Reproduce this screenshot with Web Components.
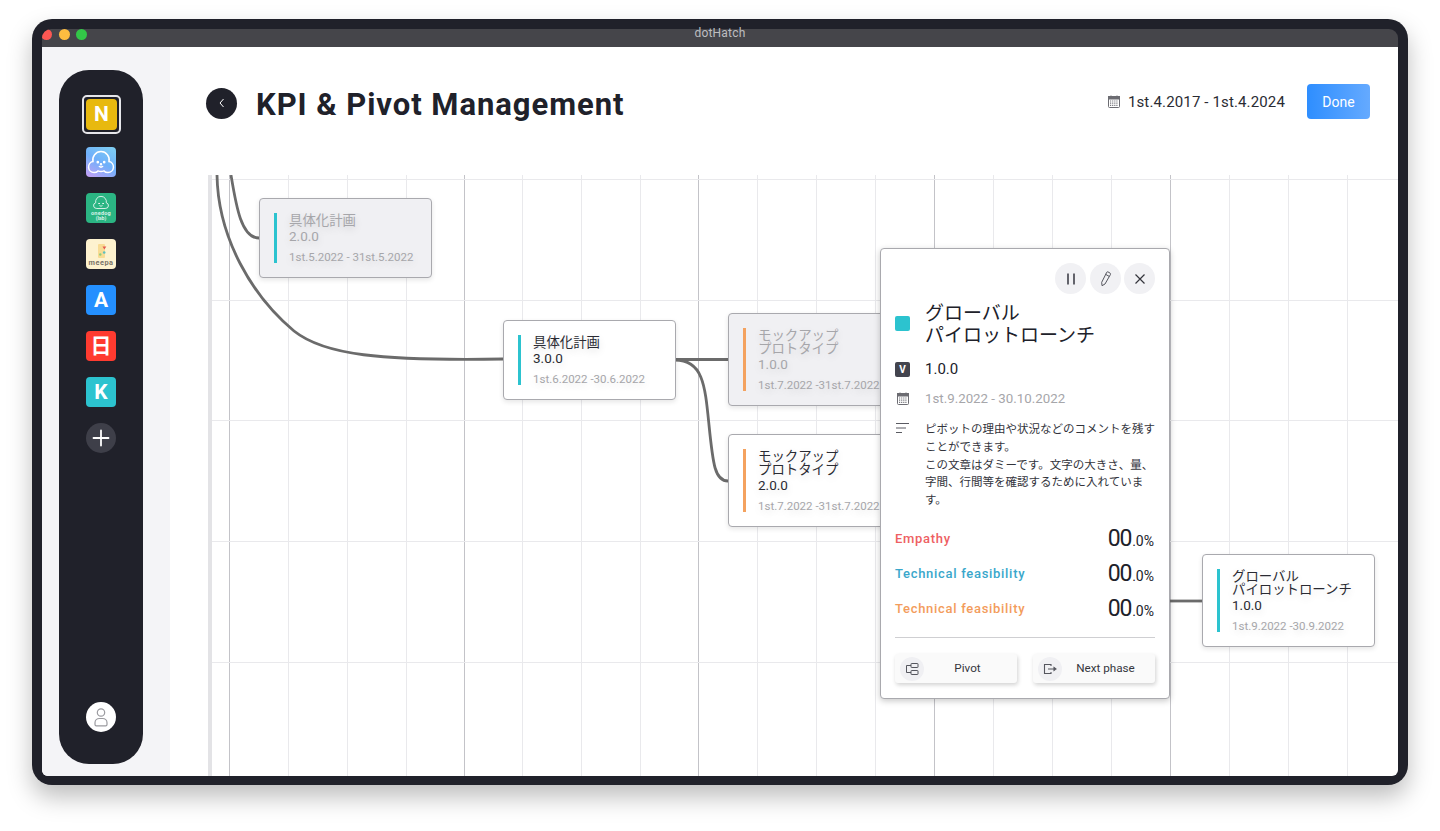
<!DOCTYPE html>
<html lang="ja">
<head>
<meta charset="utf-8">
<title>dotHatch</title>
<style>
  html, body { margin: 0; background: #fff; }
  body {
    height: 831px;
    font-family: Roboto, "Noto Sans CJK JP", sans-serif;
    color: #20212a;
    overflow: hidden;
  }
</style>
</head>
<body>
<device-frame title-text="dotHatch">
  <side-nav slot="side">
    <app-icon color="#e8b90f" label="N" selected></app-icon>
    <app-icon color="linear-gradient(30deg,#c89ff5 0%,#6fb0fa 50%,#7fd0f2 100%)">
      <svg viewBox="0 0 30 30" width="30" height="30" fill="none" stroke="#fff" stroke-width="1.5" stroke-linecap="round">
        <path d="M8 25.5A5.5 5.5 0 0 1 7 14.6A8.2 8.2 0 1 1 23 14.6A5.5 5.5 0 0 1 22 25.5C20 25.5 18.5 24.500 18 23.900Q15 25 12 23.900C11.500 24.500 10 25.500 8 25.500z"/>
        <path d="M13.400 19.500c.9.700 2.300.700 3.200 0"/>
        <circle cx="11.800" cy="15.200" r=".6" fill="#fff"/>
        <circle cx="18.200" cy="15.200" r=".6" fill="#fff"/>
        <circle cx="15" cy="17.200" r=".5" fill="#fff"/>
      </svg>
    </app-icon>
    <app-icon color="#2bb583">
      <svg viewBox="0 0 30 30" width="30" height="30" fill="none" stroke="#fff" stroke-width=".8" stroke-linecap="round">
        <path d="M10.500 15.500A2.900 2.900 0 0 1 9.700 9.800A5.400 5.400 0 1 1 20.300 9.800A2.900 2.900 0 0 1 19.500 15.500z"/>
        <circle cx="13" cy="10.500" r=".3" fill="#fff"/>
        <circle cx="17" cy="10.500" r=".3" fill="#fff"/>
        <path d="M13.800 12.800c.7.400 1.700.4 2.400 0"/>
        <text x="15" y="21.500" font-family="Roboto, sans-serif" font-size="5.600" fill="#d5f1e6" stroke="none" text-anchor="middle" letter-spacing=".2">onedog</text>
        <text x="15" y="26.500" font-family="Roboto, sans-serif" font-size="5.200" fill="#d5f1e6" stroke="none" text-anchor="middle">(lab)</text>
      </svg>
    </app-icon>
    <app-icon color="#fdf2cf">
      <svg viewBox="0 0 30 30" width="30" height="30">
        <rect x="12" y="5" width="7" height="14" rx="1" fill="#f8dc94"/>
        <path d="M16.500 7.500h3.800l-1.900 3z" fill="#e4574f"/>
        <circle cx="18.200" cy="13.500" r="1.300" fill="#5cc0c0"/>
        <circle cx="14.300" cy="15.500" r="1.200" fill="#8fcf7a"/>
        <text x="15" y="26" font-family="Roboto, sans-serif" font-size="7.400" fill="#7a746a" text-anchor="middle" letter-spacing=".5">meepa</text>
      </svg>
    </app-icon>
    <app-icon color="#2490ff" label="A"></app-icon>
    <app-icon color="#ff3b30" label="日"></app-icon>
    <app-icon color="#2cc3cf" label="K"></app-icon>
    <app-icon color="#3e3f49" round>
      <svg viewBox="0 0 30 30" width="30" height="30" stroke="#fff" stroke-width="1.800" stroke-linecap="round">
        <path d="M15 7.500v15M7.500 15h15"/>
      </svg>
    </app-icon>
    <app-icon slot="bottom" color="#fff" round>
      <svg viewBox="0 0 30 30" width="30" height="30" fill="none" stroke="#9a9a9f" stroke-width="1.200">
        <circle cx="15" cy="10.500" r="3.700"/>
        <path d="M9 22.500v-1.800c0-2.500 2-4.200 4.400-4.200h3.200c2.400 0 4.400 1.700 4.400 4.200v1.800c0 .8-.6 1.300-1.300 1.300H10.300c-.7 0-1.300-.5-1.300-1.300z"/>
      </svg>
    </app-icon>
  </side-nav>

  <page-header slot="main" heading="KPI &amp; Pivot Management" range="1st.4.2017 - 1st.4.2024" action="Done"></page-header>

  <pivot-canvas slot="main">
    <phase-node x="259" y="198" accent="#2cc3cf" muted version="2.0.0" dates="1st.5.2022 - 31st.5.2022">具体化計画</phase-node>
    <phase-node x="503" y="320" accent="#2cc3cf" version="3.0.0" dates="1st.6.2022 -30.6.2022">具体化計画</phase-node>
    <phase-node x="728" y="313" accent="#f4a25f" muted version="1.0.0" dates="1st.7.2022 -31st.7.2022">モックアップ<br>プロトタイプ</phase-node>
    <phase-node x="728" y="434" accent="#f4a25f" version="2.0.0" dates="1st.7.2022 -31st.7.2022">モックアップ<br>プロトタイプ</phase-node>
    <phase-node x="1202" y="554" accent="#2cc3cf" version="1.0.0" dates="1st.9.2022 -30.9.2022">グローバル<br>パイロットローンチ</phase-node>

    <detail-popup x="880" y="248" accent="#2cc3cf" version="1.0.0" dates="1st.9.2022 - 30.10.2022">
      <span slot="title">グローバル<br>パイロットローンチ</span>
      <span slot="comment">ピボットの理由や状況などのコメントを残す<br>ことができます。<br>この文章はダミーです。文字の大きさ、量、<br>字間、行間等を確認するために入れていま<br>す。</span>
      <metric-row slot="metrics" color="#ee5f63" label="Empathy"></metric-row>
      <metric-row slot="metrics" color="#3aa7cb" label="Technical feasibility"></metric-row>
      <metric-row slot="metrics" color="#f39c5c" label="Technical feasibility"></metric-row>
    </detail-popup>
  </pivot-canvas>
</device-frame>

<script>
const CALENDAR_ICON = `
  <svg width="12" height="13" viewBox="0 0 12 13" fill="none" stroke="#6c6c72" stroke-width="1">
    <rect x=".5" y="1.500" width="11" height="11" rx="1"/>
    <rect x=".5" y="1.500" width="11" height="2.500" fill="#6c6c72"/>
    <path d="M3 .5v2M9 .5v2"/>
    <path d="M2 6h8M2 8.200h8M2 10.400h8" stroke="#77777d" stroke-width="1.200" stroke-dasharray="1.200 .9"/>
  </svg>`;

// Outer laptop-ish window with title bar
class DeviceFrame extends HTMLElement {
  constructor() {
    super();
    const css = `
      :host {
        display: block;
        box-sizing: border-box;
        width: 1376px;
        height: 766px;
        margin: 19px 32px 0;
        padding: 10px 10px 9px;
        background: #20212a;
        border-radius: 20px;
        box-shadow: 0 12px 24px rgba(0, 0, 0, .26);
      }
      .window {
        height: 100%;
        display: flex;
        flex-direction: column;
      }
      .bar {
        flex: none;
        box-sizing: border-box;
        height: 18px;
        padding-bottom: 10px;
        background: #45454a;
        border-radius: 9px 9px 0 0;
        position: relative;
        font-size: 12px;
        line-height: 12px;
        color: #bdbdc0;
        letter-spacing: .2px;
        display: flex;
        align-items: center;
        justify-content: center;
      }
      .corner {
        position: absolute;
        inset: 0;
        overflow: hidden;
        border-radius: 9px 9px 0 0;
      }
      .lights {
        position: absolute;
        left: -1px;
        top: 0;
        display: flex;
        gap: 6.5px;
      }
      .lights i {
        width: 11px;
        height: 11px;
        border-radius: 50%;
      }
      .body {
        flex: 1;
        min-height: 0;
        display: flex;
        background: #fff;
        border-radius: 0 0 6px 6px;
        overflow: hidden;
      }
      .side {
        flex: none;
        width: 128px;
        background: #f4f4f7;
        display: flex;
        box-sizing: border-box;
        padding: 23px 26px 12px 17px;
      }
      .main {
        flex: 1;
        min-width: 0;
        display: flex;
        flex-direction: column;
      }
    `;
    const shadow = this.attachShadow({mode: 'open'});
    shadow.innerHTML = `
      <style>${css}</style>
      <div class="window">
        <div class="bar">
          <div class="corner">
            <div class="lights">
              <i style="background:#fc5753"></i><i style="background:#fdbc40"></i><i style="background:#33c748"></i>
            </div>
          </div>
          <span style="position:relative">${this.getAttribute('title-text')}</span>
        </div>
        <div class="body">
          <div class="side"><slot name="side"></slot></div>
          <div class="main"><slot name="main"></slot></div>
        </div>
      </div>
    `;
  }
}

class SideNav extends HTMLElement {
  constructor() {
    super();
    const shadow = this.attachShadow({mode: 'open'});
    shadow.innerHTML = `
      <style>
        :host {
          display: flex;
          flex-direction: column;
          align-items: center;
          box-sizing: border-box;
          width: 84px;
          padding: 29px 0 32px;
          background: #20212a;
          border-radius: 30px;
        }
        .apps { display: flex; flex-direction: column; align-items: center; gap: 16px; }
        .bottom { margin-top: auto; }
      </style>
      <div class="apps"><slot></slot></div>
      <div class="bottom"><slot name="bottom"></slot></div>
    `;
  }
}

class AppIcon extends HTMLElement {
  constructor() {
    super();
    const shadow = this.attachShadow({mode: 'open'});
    shadow.innerHTML = `
      <style>
        :host {
          display: block;
          position: relative;
          width: 30px;
          height: 30px;
        }
        :host([selected]) { margin-bottom: 2px; }
        .tile {
          width: 100%;
          height: 100%;
          border-radius: 4px;
          display: flex;
          align-items: center;
          justify-content: center;
          font: 700 21px/1 Roboto, "Noto Sans CJK JP", sans-serif;
          color: #fff;
          overflow: hidden;
        }
        :host([round]) .tile { border-radius: 50%; }
        :host([selected]) .tile { width: 31px; height: 31px; }
        :host([selected]) .ring {
          position: absolute;
          left: -4px;
          top: -4px;
          width: 35px;
          height: 35px;
          border: 2px solid #e6e6ea;
          border-radius: 5px;
        }
        ::slotted(svg) { display: block; }
      </style>
      <div class="ring"></div>
      <div class="tile" style="background:${this.getAttribute('color')}">${this.getAttribute('label') || ''}<slot></slot></div>
    `;
  }
}

class PageHeader extends HTMLElement {
  constructor() {
    super();
    const css = `
      :host {
        display: flex;
        align-items: center;
        flex: none;
        box-sizing: border-box;
        height: 35px;
        margin: 37px 28px 56px 36px;
      }
      .back {
        width: 31px;
        height: 31px;
        border-radius: 50%;
        background: #20212a;
        display: flex;
        align-items: center;
        justify-content: center;
        margin-top: 3px;
      }
      h1 {
        margin: 5px 0 0 19px;
        font: 700 31px/35px Roboto, sans-serif;
        letter-spacing: .95px;
        color: #20212a;
      }
      .range {
        margin-left: auto;
        display: flex;
        align-items: center;
        gap: 8px;
        font-size: 15px;
        letter-spacing: .14px;
        color: #2a2b33;
      }
      button {
        margin-left: 22px;
        width: 63px;
        height: 35px;
        border: none;
        border-radius: 4px;
        background: linear-gradient(90deg, #2e8eff, #65aaff);
        color: #fff;
        font: 400 14px Roboto, sans-serif;
      }
    `;
    const shadow = this.attachShadow({mode: 'open'});
    shadow.innerHTML = `
      <style>${css}</style>
      <div class="back">
        <svg width="10" height="10" viewBox="0 0 10 10" fill="none" stroke="#fff" stroke-width="1"><path d="M6.500 1 3 5l3.500 4"/></svg>
      </div>
      <h1>${this.getAttribute('heading').replace('&', '&amp;')}</h1>
      <div class="range">${CALENDAR_ICON}<span>${this.getAttribute('range')}</span></div>
      <button>${this.getAttribute('action')}</button>
    `;
  }
}

// Free canvas: grid lines and connectors share page coordinates through the viewBox
class PivotCanvas extends HTMLElement {
  constructor() {
    super();
    const columns = [229, 288, 347, 406, 464, 522, 581, 640, 698, 757, 816, 875, 934, 993, 1052, 1111, 1170, 1229, 1288, 1347];
    let lines = '';
    columns.forEach((x, i) => {
      lines += `<line x1="${x + .5}" y1="175" x2="${x + .5}" y2="776" stroke="${i % 4 === 0 ? '#c3c3c8' : '#e9e9ec'}"/>`;
    });
    [179, 300, 420, 541, 662].forEach(y => {
      lines += `<line x1="212" y1="${y + .5}" x2="1398" y2="${y + .5}" stroke="#e9e9ec"/>`;
    });

    const shadow = this.attachShadow({mode: 'open'});
    shadow.innerHTML = `
      <style>
        :host {
          display: block;
          position: relative;
          flex: 1;
          min-height: 0;
          overflow: hidden;
        }
        svg { position: absolute; left: 0; top: 0; }
      </style>
      <svg width="1228" height="601" viewBox="170 175 1228 601">
        ${lines}
        <rect x="208" y="175" width="4" height="601" fill="#e3e3e6"/>
        <g fill="none" stroke="#6b6b6b" stroke-width="2.800">
          <path d="M231 175C236 205 241 238 259 238"/>
          <path d="M217 175C218 238 252 296 294 331C324 355 380 361 503 359"/>
          <path d="M675 359.500H728"/>
          <path d="M675 360C703 360 705 385 709 425C713 465 715 481 728 481"/>
          <path d="M1170 601H1202"/>
        </g>
      </svg>
      <slot></slot>
    `;
  }
}

class PhaseNode extends HTMLElement {
  constructor() {
    super();
    const css = `
      :host {
        position: absolute;
        display: flex;
        gap: 12.5px;
        box-sizing: border-box;
        width: 173px;
        padding: 14px;
        background: #fff;
        border: 1px solid #a9a9ae;
        border-radius: 4px;
        box-shadow: 0 2px 5px rgba(0, 0, 0, .1);
        color: #2a2b33;
        text-shadow: 0 3px 8px rgba(0, 0, 0, .14);
        font-family: Roboto, "Noto Sans CJK JP", sans-serif;
      }
      :host([muted]) {
        background: #f0f0f3;
        color: #a6a6aa;
      }
      .bar {
        flex: none;
        width: 2.5px;
      }
      .text { white-space: nowrap; padding-top: 1.2px; }
      .title { font-size: 13.4px; line-height: 13px; }
      .version { margin-top: 1.3px; font-size: 13.5px; line-height: 16px; }
      .dates {
        margin: 5.5px 0 -1.5px;
        font-size: 11.5px;
        line-height: 15px;
        color: #a6a6aa;
      }
    `;
    const shadow = this.attachShadow({mode: 'open'});
    shadow.innerHTML = `
      <style>${css}</style>
      <div class="bar" style="background:${this.getAttribute('accent')}"></div>
      <div class="text">
        <div class="title"><slot></slot></div>
        <div class="version">${this.getAttribute('version')}</div>
        <div class="dates">${this.getAttribute('dates')}</div>
      </div>
    `;
    this.style.left = (this.getAttribute('x') - 170) + 'px';
    this.style.top = (this.getAttribute('y') - 175) + 'px';
  }
}

class IconButton extends HTMLElement {
  constructor() {
    super();
    const shadow = this.attachShadow({mode: 'open'});
    shadow.innerHTML = `
      <style>
        :host {
          display: flex;
          align-items: center;
          justify-content: center;
          width: 31px;
          height: 31px;
          border-radius: 50%;
          background: #f1f1f4;
        }
        ::slotted(svg) { display: block; }
      </style>
      <slot></slot>
    `;
  }
}

class ActionButton extends HTMLElement {
  constructor() {
    super();
    const shadow = this.attachShadow({mode: 'open'});
    shadow.innerHTML = `
      <style>
        :host {
          flex: 1;
          display: flex;
          align-items: center;
          height: 29px;
          padding-left: 5px;
          background: #fafafa;
          border-radius: 3px;
          box-shadow: 1px 2px 4px rgba(0, 0, 0, .18);
          font-size: 11.7px;
          color: #36373e;
        }
        .icon {
          flex: none;
          width: 24px;
          height: 24px;
          border-radius: 50%;
          background: #f0f0f3;
          display: flex;
          align-items: center;
          justify-content: center;
        }
        .label {
          flex: 1;
          text-align: center;
          padding: 0 6px 1px 0;
        }
        ::slotted(svg) { display: block; }
      </style>
      <div class="icon"><slot name="icon"></slot></div>
      <div class="label"><slot></slot></div>
    `;
  }
}

class MetricRow extends HTMLElement {
  constructor() {
    super();
    const shadow = this.attachShadow({mode: 'open'});
    shadow.innerHTML = `
      <style>
        :host {
          display: flex;
          align-items: center;
          justify-content: space-between;
          height: 35px;
        }
        .label {
          font-size: 13px;
          font-weight: 500;
          letter-spacing: .7px;
        }
        .value { margin-right: 1px; color: #20212a; font-size: 14px; white-space: nowrap; }
        .value b {
          font-size: 23px;
          font-weight: 400;
          letter-spacing: -1.2px;
          margin-right: 1px;
        }
      </style>
      <span class="label" style="color:${this.getAttribute('color')}">${this.getAttribute('label')}</span>
      <span class="value"><b>00</b>.0%</span>
    `;
  }
}

class DetailPopup extends HTMLElement {
  constructor() {
    super();
    const css = `
      :host {
        position: absolute;
        display: block;
        box-sizing: border-box;
        width: 290px;
        padding: 14px 14px 15px;
        background: #fff;
        border: 1px solid #a9a9ae;
        border-radius: 4px;
        box-shadow: 0 2px 6px rgba(0, 0, 0, .22);
        color: #20212a;
      }
      .tools {
        display: flex;
        justify-content: flex-end;
        gap: 3.5px;
      }
      .row {
        display: flex;
        align-items: center;
        gap: 15px;
      }
      .lead {
        flex: none;
        width: 15px;
        display: flex;
        justify-content: center;
      }
      .title {
        margin-top: 7px;
        font: 400 19px/22px "Noto Sans CJK JP", sans-serif;
        white-space: nowrap;
      }
      .swatch {
        width: 15px;
        height: 15px;
        border-radius: 2px;
      }
      .ver { margin-top: 14px; height: 20px; font-size: 15px; }
      .v {
        width: 15px;
        height: 15px;
        border-radius: 2px;
        background: #43444e;
        color: #fff;
        font-size: 10px;
        font-weight: 700;
        line-height: 15px;
        text-align: center;
      }
      .date { margin-top: 9px; height: 20px; font-size: 13.3px; color: #a6a6aa; }
      .comment {
        align-items: flex-start;
        margin-top: 12px;
        font: 400 11.5px/17.8px "Noto Sans CJK JP", sans-serif;
        color: #33343c;
        white-space: nowrap;
      }
      .comment .lead { padding-top: 3px; }
      .metrics { margin-top: 12.5px; }
      hr {
        margin: 11px 0 16px;
        border: none;
        border-top: 1px solid #cfcfd2;
      }
      .actions { display: flex; gap: 16px; }
    `;
    const shadow = this.attachShadow({mode: 'open'});
    shadow.innerHTML = `
      <style>${css}</style>
      <div class="tools">
        <icon-button>
          <svg width="14" height="14" viewBox="0 0 14 14" stroke="#4a4b53" stroke-width="1.700"><path d="M4 1.500v11M10 1.500v11"/></svg>
        </icon-button>
        <icon-button>
          <svg width="16" height="18" viewBox="0 0 16 18" fill="none" stroke="#55565e" stroke-width="1"><path d="M9.800 2.200c.3-.4.8-.5 1.200-.3l2.200 1.300c.4.2.5.8.3 1.200L8 14l-3 1.700-.3-3.400zM8.600 4.300l3.600 2.100"/></svg>
        </icon-button>
        <icon-button>
          <svg width="14" height="14" viewBox="0 0 14 14" stroke="#34353c" stroke-width="1.200"><path d="M2.500 2.500l9 9M11.500 2.500l-9 9"/></svg>
        </icon-button>
      </div>
      <div class="row title">
        <div class="lead"><div class="swatch" style="background:${this.getAttribute('accent')}"></div></div>
        <div><slot name="title"></slot></div>
      </div>
      <div class="row ver">
        <div class="lead"><div class="v">V</div></div>
        <div>${this.getAttribute('version')}</div>
      </div>
      <div class="row date">
        <div class="lead">${CALENDAR_ICON}</div>
        <div>${this.getAttribute('dates')}</div>
      </div>
      <div class="row comment">
        <div class="lead">
          <svg width="13" height="11" viewBox="0 0 13 11" stroke="#5a5b62" stroke-width="1"><path d="M0 .5h13M0 5h10M0 9.500h6"/></svg>
        </div>
        <div><slot name="comment"></slot></div>
      </div>
      <div class="metrics"><slot name="metrics"></slot></div>
      <hr>
      <div class="actions">
        <action-button>
          <svg slot="icon" width="14" height="14" viewBox="0 0 14 14" fill="none" stroke="#55565e" stroke-width="1"><rect x="6" y="1.500" width="7" height="4" rx=".5"/><rect x="6" y="8.500" width="7" height="4" rx=".5"/><path d="M6 3.500H1.500v7H6"/></svg>
          Pivot
        </action-button>
        <action-button>
          <svg slot="icon" width="14" height="14" viewBox="0 0 14 14" fill="none" stroke="#55565e" stroke-width="1.100"><path d="M8 4V2.500H1.500v9H8V10M5 7h7"/><path d="M11 5.500 13 7l-2 1.500z" fill="#55565e"/></svg>
          Next phase
        </action-button>
      </div>
    `;
    this.style.left = (this.getAttribute('x') - 170) + 'px';
    this.style.top = (this.getAttribute('y') - 175) + 'px';
  }
}

customElements.define('device-frame', DeviceFrame);
customElements.define('side-nav', SideNav);
customElements.define('app-icon', AppIcon);
customElements.define('page-header', PageHeader);
customElements.define('pivot-canvas', PivotCanvas);
customElements.define('phase-node', PhaseNode);
customElements.define('icon-button', IconButton);
customElements.define('action-button', ActionButton);
customElements.define('metric-row', MetricRow);
customElements.define('detail-popup', DetailPopup);
</script>
</body>
</html>
